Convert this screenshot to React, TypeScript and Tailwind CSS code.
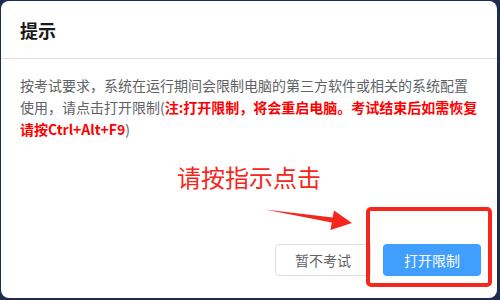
import React from "react";

export default function App() {
  const font = { fontFamily: '"Noto Sans CJK SC", "Noto Sans", sans-serif' };
  return (
    <div className="relative w-[500px] h-[300px] bg-[#1d2c4f] pt-[1px] pl-[1px] pr-[3px] pb-[2px]" style={font}>
      <div className="w-full h-full bg-white rounded-[8px] flex flex-col">
        <div className="h-[58px] flex items-center px-[19px] border-b border-[#dcdfe6]">
          <span className="text-[18px] font-bold text-[#1a1a1a] leading-none">提示</span>
        </div>
        <div className="pt-[15px] px-[19px] text-[14px] leading-[22px] text-[#606266]">
          按考试要求，系统在运行期间会限制电脑的第三方软件或相关的系统配置
          <br />
          使用，请点击打开限制(
          <span className="text-[#ff0000] font-bold">注:打开限制，将会重启电脑。考试结束后如需恢复</span>
          <br />
          <span className="text-[#ff0000] font-bold">请按Ctrl+Alt+F9</span>)
        </div>
        <div className="mt-[21px] text-center text-[24px] leading-[32px] text-[#f5261c]">请按指示点击</div>
        <div className="mt-[51px] flex justify-end gap-[12px] pr-[16px]">
          <button className="w-[96px] h-[32px] rounded-[4px] border border-[#dcdfe6] bg-white text-[14px] text-[#606266]">
            暂不考试
          </button>
          <button className="w-[98px] h-[32px] rounded-[4px] bg-[#409eff] text-[14px] text-white">
            打开限制
          </button>
        </div>
      </div>
      <svg className="absolute left-0 top-0 pointer-events-none" width="500" height="300" viewBox="0 0 500 300">
        <polygon
          points="265,209.5 332.6,217.5 334,210.5 352,223 330.5,230 331.8,222.5"
          fill="#f5261c"
        />
      </svg>
      <div className="absolute left-[366px] top-[207px] w-[126px] h-[80px] border-[4px] border-[#f5261c] rounded-[5px]" />
    </div>
  );
}
